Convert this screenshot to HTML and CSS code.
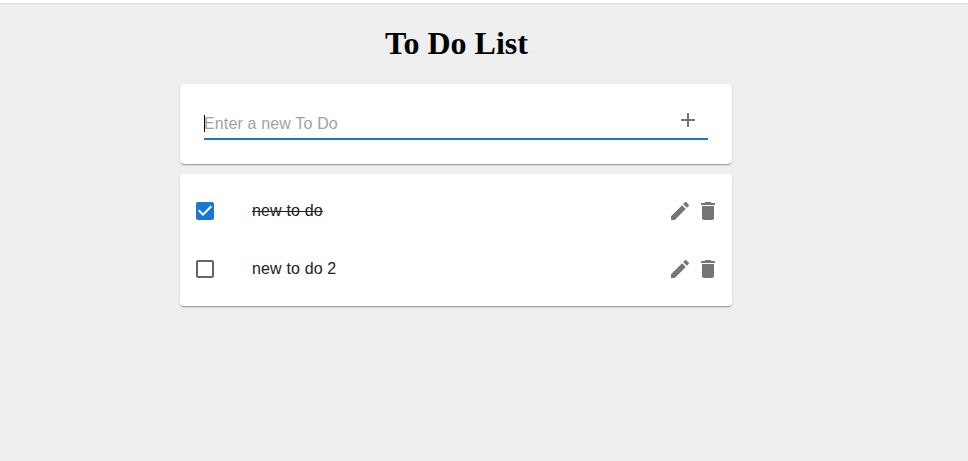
FILE: index.html
```html
<!DOCTYPE html>
<html lang="en">
<head>
<meta charset="utf-8">
<title>To Do List</title>
<link rel="stylesheet" href="styles.css">
</head>
<body>
<main class="app">
  <h1 class="title">To Do List</h1>
  <form class="card entry">
    <div class="field">
      <span class="caret"></span>
      <span class="placeholder">Enter a new To Do</span>
      <svg class="icon add" viewBox="0 0 24 24"><path d="M19 13h-6v6h-2v-6H5v-2h6V5h2v6h6v2z"/></svg>
    </div>
  </form>
  <ul class="card list">
    <li class="item">
      <svg class="icon check checked" viewBox="0 0 24 24"><path d="M19 3H5c-1.11 0-2 .9-2 2v14c0 1.1.89 2 2 2h14c1.11 0 2-.9 2-2V5c0-1.1-.89-2-2-2zm-9 14l-5-5 1.41-1.41L10 14.17l7.59-7.59L19 8l-9 9z"/></svg>
      <span class="text done">new to do</span>
      <svg class="icon" viewBox="0 0 24 24"><path d="M3 17.25V21h3.75L17.81 9.94l-3.75-3.75L3 17.25zM20.71 7.04c.39-.39.39-1.02 0-1.41l-2.34-2.34a.9959.9959 0 0 0-1.41 0l-1.83 1.83 3.75 3.75 1.83-1.83z"/></svg>
      <svg class="icon" viewBox="0 0 24 24"><path d="M6 19c0 1.1.9 2 2 2h8c1.1 0 2-.9 2-2V7H6v12zM19 4h-3.5l-1-1h-5l-1 1H5v2h14V4z"/></svg>
    </li>
    <li class="item">
      <svg class="icon check" viewBox="0 0 24 24"><path d="M19 5v14H5V5h14m0-2H5c-1.1 0-2 .9-2 2v14c0 1.1.9 2 2 2h14c1.1 0 2-.9 2-2V5c0-1.1-.9-2-2-2z"/></svg>
      <span class="text">new to do 2</span>
      <svg class="icon" viewBox="0 0 24 24"><path d="M3 17.25V21h3.75L17.81 9.94l-3.75-3.75L3 17.25zM20.71 7.04c.39-.39.39-1.02 0-1.41l-2.34-2.34a.9959.9959 0 0 0-1.41 0l-1.83 1.83 3.75 3.75 1.83-1.83z"/></svg>
      <svg class="icon" viewBox="0 0 24 24"><path d="M6 19c0 1.1.9 2 2 2h8c1.1 0 2-.9 2-2V7H6v12zM19 4h-3.5l-1-1h-5l-1 1H5v2h14V4z"/></svg>
    </li>
  </ul>
</main>
</body>
</html>
```
FILE: styles.css
```css
* { box-sizing: border-box; }
body {
  margin: 0;
  min-height: 461px;
  background: #efefef;
  border-top: 3px solid #fff;
  font-family: "Liberation Sans", Arial, sans-serif;
}
.app {
  border-top: 1px solid #dadce0;
  padding: 21px 0 0 180px;
}
.title {
  width: 553px;
  margin: 0 0 22px;
  text-align: center;
  font: bold 32px/37px "Liberation Serif", "Times New Roman", serif;
}
.card {
  width: 552px;
  margin: 0 0 10px;
  background: #fff;
  border-radius: 4px;
  box-shadow: 0 2px 1px -1px rgba(0,0,0,.2), 0 1px 1px rgba(0,0,0,.14), 0 1px 3px rgba(0,0,0,.12);
}
.entry { height: 80px; padding: 24px; }
.field {
  display: flex;
  align-items: center;
  height: 32px;
  border-bottom: 2px solid #1976d2;
}
.caret { width: 1px; height: 17px; margin: 1px -1px 0 0; background: #000; }
.placeholder { flex: 1; padding-top: 2px; color: #a2a2a2; font-size: 16px; letter-spacing: .15px; }
.icon { width: 24px; height: 24px; flex: none; fill: #757575; }
.add { margin: 0 8px 6px 0; }
.list { height: 132px; padding: 8px 12px; list-style: none; }
.item { display: flex; align-items: center; height: 58px; gap: 4px; }
.check { margin: 0 31px 0 1px; fill: #666; }
.checked { fill: #1976d2; }
.text { flex: 1; font-size: 16px; letter-spacing: .15px; color: #212121; }
.done { text-decoration: line-through; }
```
